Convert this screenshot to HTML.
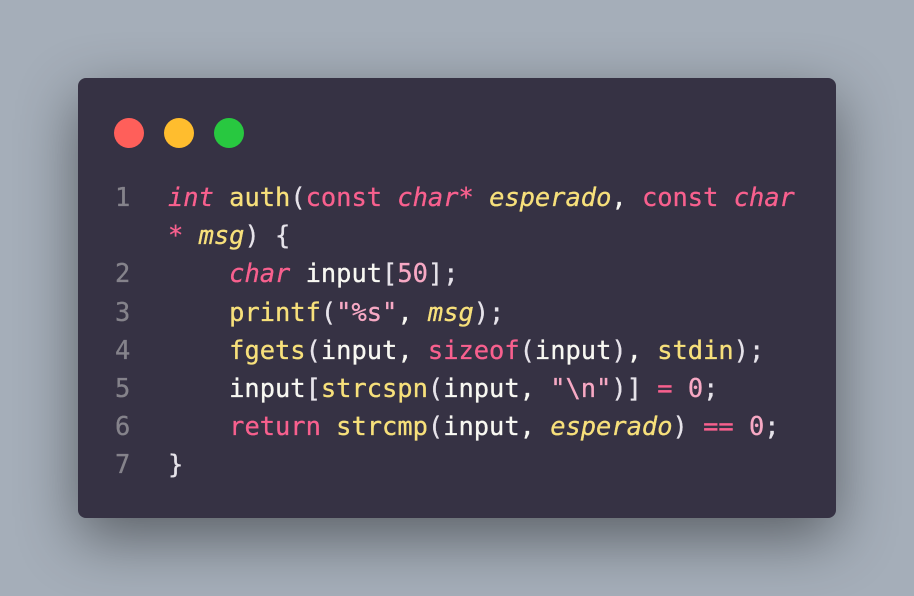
<!DOCTYPE html>
<html><head><style>
html,body{margin:0;padding:0}
body{width:914px;height:596px;background:#a5aeb9;position:relative;overflow:hidden;font-family:"DejaVu Sans Mono","Liberation Mono",monospace}
.card{position:absolute;left:78px;top:78px;width:758px;height:440px;background:#363244;border-radius:8px;box-shadow:0 20px 60px rgba(0,0,0,0.45)}
.dot{position:absolute;top:40px;width:30px;height:30px;border-radius:50%}
pre{position:absolute;margin:0;left:34px;top:100px;font-family:inherit;font-size:25.4px;line-height:38.2px;color:#f8f8f2;white-space:pre;-webkit-text-stroke:0.3px currentColor}
.n{color:#85838b;display:inline-block;width:53px;padding-left:3px}
.k{color:#f8608e}.i{color:#f8608e;font-style:italic}
.f{color:#f7e07b}.v{color:#f7e07b;font-style:italic}
.s{color:#f7a9c4}.p{color:#e6e3ea}
</style></head><body>
<div class="card">
<div class="dot" style="left:36px;background:#ff5f5a"></div>
<div class="dot" style="left:86px;background:#ffbd2e"></div>
<div class="dot" style="left:136px;background:#28c840"></div>
<pre><span class="n">1</span><span class="i">int</span> <span class="f">auth</span><span class="p">(</span><span class="k">const</span> <span class="i">char*</span> <span class="v">esperado</span>, <span class="k">const</span> <span class="i">char</span>
<span class="n"></span><span class="k">*</span> <span class="v">msg</span><span class="p">) {</span>
<span class="n">2</span>    <span class="i">char</span> input<span class="p">[</span><span class="s">50</span><span class="p">];</span>
<span class="n">3</span>    <span class="f">printf</span><span class="p">(</span><span class="s">"%s"</span>, <span class="v">msg</span><span class="p">);</span>
<span class="n">4</span>    <span class="f">fgets</span><span class="p">(</span>input, <span class="k">sizeof</span><span class="p">(</span>input<span class="p">)</span>, <span class="f">stdin</span><span class="p">);</span>
<span class="n">5</span>    input<span class="p">[</span><span class="f">strcspn</span><span class="p">(</span>input, <span class="s">"\n"</span><span class="p">)]</span> <span class="k">=</span> <span class="s">0</span><span class="p">;</span>
<span class="n">6</span>    <span class="k">return</span> <span class="f">strcmp</span><span class="p">(</span>input, <span class="v">esperado</span><span class="p">)</span> <span class="k">==</span> <span class="s">0</span><span class="p">;</span>
<span class="n">7</span><span class="p">}</span></pre>
</div>
</body></html>
